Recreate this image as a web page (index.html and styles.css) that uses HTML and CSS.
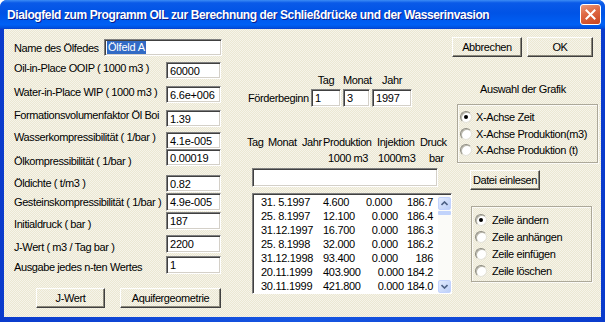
FILE: index.html
```html
<!DOCTYPE html>
<html lang="de">
<head>
<meta charset="utf-8">
<title>Dialogfeld OIL</title>
<link rel="stylesheet" href="styles.css">
</head>
<body>
<div class="window">
  <div class="titlebar">
    <span class="title">Dialogfeld zum Programm OIL zur Berechnung der Schließdrücke und der Wasserinvasion</span>
    <span class="close"><svg width="11" height="11" viewBox="0 0 11 11"><path d="M1.5 1.5 L9.5 9.5 M9.5 1.5 L1.5 9.5" stroke="#fff" stroke-width="2" stroke-linecap="square"/></svg></span>
  </div>
  <div class="frame">
    <div class="client">
      <div class="col-left">
        <div class="name-row">
          <span class="name-label">Name des Ölfedes</span>
          <div class="edit name-edit"><span class="sel">Ölfeld A</span></div>
        </div>
        <div class="params">
          <div class="labels">
            <span>Oil-in-Place OOIP ( 1000 m3 )</span>
            <span>Water-in-Place WIP ( 1000 m3 )</span>
            <span>Formationsvolumenfaktor Öl Boi</span>
            <span>Wasserkompressibilität ( 1/bar )</span>
            <span>Ölkompressibilität ( 1/bar )</span>
            <span>Öldichte ( t/m3 )</span>
            <span>Gesteinskompressibilität ( 1/bar )</span>
            <span>Initialdruck ( bar )</span>
            <span>J-Wert ( m3 / Tag bar )</span>
            <span>Ausgabe jedes n-ten Wertes</span>
          </div>
          <div class="values">
            <div class="edit">60000</div>
            <div class="edit">6.6e+006</div>
            <div class="edit">1.39</div>
            <div class="edit">4.1e-005</div>
            <div class="edit">0.00019</div>
            <div class="edit">0.82</div>
            <div class="edit tall">4.9e-005</div>
            <div class="edit tall">187</div>
            <div class="edit tall">2200</div>
            <div class="edit tall">1</div>
          </div>
        </div>
        <div class="actions">
          <button class="btn btn-jwert">J-Wert</button>
          <button class="btn btn-aqui">Aquifergeometrie</button>
        </div>
      </div>

      <div class="col-mid">
        <div class="date-head">
          <span class="d1">Tag</span><span class="d2">Monat</span><span class="d3">Jahr</span>
        </div>
        <div class="start-row">
          <span class="start-label">Förderbeginn</span>
          <div class="edit d1">1</div>
          <div class="edit d2">3</div>
          <div class="edit d3">1997</div>
        </div>
        <div class="thead">
          <span>Tag</span><span>Monat</span><span>Jahr</span><span>Produktion</span><span>Injektion</span><span>Druck</span>
          <span></span><span></span><span></span><span class="u1">1000 m3</span><span class="u2">1000m3</span><span class="u3">bar</span>
        </div>
        <div class="edit line-edit"></div>
        <div class="listbox">
          <div class="rows">
            <div class="row"><span class="c-date">31. 5.1997</span><span>4.600</span><span class="c-inj">0.000</span><span class="c-p">186.7</span></div>
            <div class="row"><span class="c-date">25. 8.1997</span><span>12.100</span><span class="c-inj">0.000</span><span class="c-p">186.4</span></div>
            <div class="row"><span class="c-date">31.12.1997</span><span>16.700</span><span class="c-inj">0.000</span><span class="c-p">186.3</span></div>
            <div class="row"><span class="c-date">25. 8.1998</span><span>32.000</span><span class="c-inj">0.000</span><span class="c-p">186.2</span></div>
            <div class="row"><span class="c-date">31.12.1998</span><span>93.400</span><span class="c-inj">0.000</span><span class="c-p">186</span></div>
            <div class="row"><span class="c-date">20.11.1999</span><span>403.900</span><span class="c-inj">0.000</span><span class="c-p">184.2</span></div>
            <div class="row"><span class="c-date">30.11.1999</span><span>421.800</span><span class="c-inj">0.000</span><span class="c-p">184.0</span></div>
          </div>
          <div class="scrollbar">
            <div class="sb-btn"><svg width="7" height="5" viewBox="0 0 7 5"><path d="M0.5 4 L3.5 1 L6.5 4" fill="none" stroke="#4d6185" stroke-width="1.6"/></svg></div>
            <div class="sb-track"><div class="sb-thumb"></div></div>
            <div class="sb-btn"><svg width="7" height="5" viewBox="0 0 7 5"><path d="M0.5 1 L3.5 4 L6.5 1" fill="none" stroke="#4d6185" stroke-width="1.6"/></svg></div>
          </div>
        </div>
      </div>

      <div class="col-right">
        <div class="top-btns">
          <button class="btn btn-cancel">Abbrechen</button>
          <button class="btn btn-ok">OK</button>
        </div>
        <div class="graf-label">Auswahl der Grafik</div>
        <div class="group group-graf">
          <div class="opt"><span class="radio on"></span>X-Achse Zeit</div>
          <div class="opt"><span class="radio"></span>X-Achse Produktion(m3)</div>
          <div class="opt"><span class="radio"></span>X-Achse Produktion (t)</div>
        </div>
        <button class="btn btn-file">Datei einlesen</button>
        <div class="group group-rows">
          <div class="opt"><span class="radio on"></span>Zeile ändern</div>
          <div class="opt"><span class="radio"></span>Zeile anhängen</div>
          <div class="opt"><span class="radio"></span>Zeile einfügen</div>
          <div class="opt"><span class="radio"></span>Zeile löschen</div>
        </div>
      </div>
    </div>
  </div>
</div>
</body>
</html>
```
FILE: styles.css
```css
* { box-sizing: border-box; margin: 0; padding: 0; }

body {
  margin: 0;
  background: #fff;
  font-family: "Liberation Sans", Arial, sans-serif;
  font-size: 11px;
  letter-spacing: -0.4px;
  color: #000;
}

.window {
  width: 605px;
  height: 322px;
  display: flex;
  flex-direction: column;
  background: #0b45d8;
  border-radius: 7px 7px 0 0;
  overflow: hidden;
}

.titlebar {
  height: 29px;
  flex: none;
  display: flex;
  align-items: center;
  justify-content: space-between;
  padding: 0 4px 0 7px;
  background: linear-gradient(180deg, #3c8cf5 0, #0a5ae8 10%, #0053e6 45%, #0060f5 85%, #0052e0 95%, #0a3fcf 100%);
}

.title {
  color: #fff;
  font-weight: bold;
  font-size: 12px;
  letter-spacing: -0.4px;
  white-space: nowrap;
  text-shadow: 1px 1px 0 #0a1d8c;
  padding-top: 1px;
}

.close {
  width: 21px;
  height: 21px;
  border: 1px solid #fff;
  border-radius: 3px;
  background: linear-gradient(160deg, #ec9a7c 0, #df6a45 40%, #c9431f 100%);
  display: flex;
  align-items: center;
  justify-content: center;
}

.frame {
  flex: 1;
  display: flex;
  padding: 0 4px 5px 4px;
  background: linear-gradient(90deg, #0a3bcc, #1656e2 50%, #0a3bcc);
}

.client {
  flex: 1;
  display: flex;
  white-space: nowrap;
  background-color: #ebe7d2;
  background-image: repeating-conic-gradient(#f6f4ea 0 25%, transparent 0 50%);
  background-size: 2px 2px;
}

/* edits */
.edit {
  background: #fff;
  border: 1px solid;
  border-color: #7f7f7f #fff #fff #7f7f7f;
  box-shadow: inset 1px 1px 0 #404040, inset -1px -1px 0 #d4d0c8;
  padding: 2px 0 0 3px;
  line-height: 12px;
  letter-spacing: -0.2px;
  white-space: nowrap;
  overflow: hidden;
  height: 17px;
}

.edit.tall { height: 18px; }

/* buttons */
.btn {
  height: 20px;
  font: inherit;
  letter-spacing: inherit;
  color: #000;
  white-space: nowrap;
  background-color: #ebe7d2;
  background-image: repeating-conic-gradient(#f6f4ea 0 25%, transparent 0 50%);
  background-size: 2px 2px;
  border: 1px solid;
  border-color: #fff #404040 #404040 #fff;
  box-shadow: inset -1px -1px 0 #8a877a;
  display: flex;
  align-items: center;
  justify-content: center;
}

/* left column */
.col-left {
  width: 220px;
  flex: none;
  display: flex;
  flex-direction: column;
  padding: 10px 0 0 10px;
}

.name-row {
  display: flex;
  align-items: center;
  height: 17px;
}

.name-label { width: 90px; }

.name-edit {
  width: 118px;
  padding: 1px 0 0 2px;
}

.sel {
  display: inline-block;
  background: #316ac5;
  color: #fff;
  line-height: 13px;
  padding: 0 1px;
}

.params {
  display: flex;
  margin-top: 6px;
}

.labels {
  width: 152px;
  display: grid;
  grid-template-rows: 24px 23px 22px 24px 22px 19px 22px 23px 20px 13px;
  line-height: 13px;
}

.values {
  width: 55px;
  display: grid;
  grid-template-rows: 24px 24px 22px 17px 26px 18px 19px 23px 21px 19px;
}

.actions {
  display: flex;
  gap: 15px;
  margin: 13px 0 0 22px;
}

.btn-jwert { width: 69px; }
.btn-aqui { width: 101px; }

/* middle column */
.col-mid {
  width: 228px;
  flex: none;
  display: flex;
  flex-direction: column;
  padding: 45px 0 0 24px;
}

.date-head {
  display: flex;
  gap: 2px;
  margin-left: 63px;
  line-height: 13px;
}

.date-head span { text-align: center; }

.d1 { width: 30px; }
.d2 { width: 27px; }
.d3 { width: 40px; }

.start-row {
  display: flex;
  align-items: center;
  gap: 2px;
  margin-top: 2px;
}

.start-row .edit { height: 18px; }

.start-label { width: 61px; }

.thead {
  display: grid;
  grid-template-columns: 21px 34px 21px 54px 43px auto;
  line-height: 16px;
  margin: 27px 0 0 -1px;
}

.u1 { padding-left: 5px; }
.u2 { padding-left: 1px; }
.u3 { padding-left: 9px; }

.line-edit {
  width: 186px;
  height: 19px;
  margin: 2px 0 0 4px;
}

.listbox {
  width: 200px;
  height: 101px;
  margin: 6px 0 0 4px;
  display: flex;
  background: #fff;
  border: 1px solid;
  border-color: #7f7f7f #fff #fff #7f7f7f;
  box-shadow: inset 1px 1px 0 #404040;
  padding: 1px 0 0 1px;
}

.rows {
  flex: 1;
  padding: 0 5px 0 7px;
  overflow: hidden;
  letter-spacing: -0.3px;
}

.row {
  display: flex;
  height: 14px;
  line-height: 14px;
}

.c-date { width: 62px; flex: none; }
.c-inj { margin-left: 17px; }
.c-p { flex: 1; text-align: right; }

.scrollbar {
  width: 13px;
  flex: none;
  display: flex;
  flex-direction: column;
  padding-top: 2px;
  background: #fbfbf8;
}

.sb-btn {
  height: 13px;
  flex: none;
  display: flex;
  align-items: center;
  justify-content: center;
  background: linear-gradient(135deg, #e2ebfe, #bccff8);
  border: 1px solid #c3d3fd;
  border-radius: 2px;
}

.sb-track {
  flex: 1;
  padding-top: 1px;
}

.sb-thumb {
  height: 4px;
  background: #c1d3fb;
  border-radius: 1px;
}

/* right column */
.col-right {
  flex: 1;
  display: flex;
  flex-direction: column;
  align-items: flex-start;
  padding-top: 8px;
}

.top-btns {
  display: flex;
  gap: 5px;
}

.btn-cancel { width: 70px; }
.btn-ok { width: 66px; }

.graf-label {
  margin: 26px 0 0 28px;
  line-height: 13px;
}

.group {
  border: 1px solid #aca899;
  box-shadow: inset 1px 1px 0 #fbfaf6, 1px 1px 0 #fbfaf6;
}

.group-graf {
  width: 141px;
  height: 59px;
  margin: 8px 0 0 5px;
  padding: 4px 0 0 2px;
}

.group-graf .opt { height: 16.5px; gap: 4px; }

.btn-file {
  width: 70px;
  margin: 7px 0 0 18px;
}

.group-rows {
  width: 121px;
  height: 76px;
  margin: 16px 0 0 19px;
  padding: 4px 0 0 3px;
}

.group-rows .opt { height: 17px; gap: 5px; }

.opt {
  display: flex;
  align-items: center;
}

.radio {
  width: 12px;
  height: 12px;
  flex: none;
  border-radius: 50%;
  background: #fff;
  border: 1px solid;
  border-color: #8d8b80 #e4e2d8 #e4e2d8 #8d8b80;
  box-shadow: inset 1px 1px 0 #b9b7ab;
  display: flex;
  align-items: center;
  justify-content: center;
}

.radio.on::after {
  content: "";
  width: 4px;
  height: 4px;
  border-radius: 50%;
  background: #000;
}
```
